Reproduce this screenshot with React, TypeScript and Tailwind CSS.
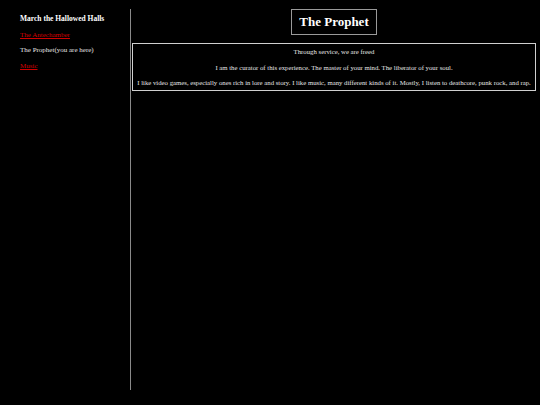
export default function App() {
  return (
    <div
      className="min-h-[405px] bg-black text-[#e6e6e6] flex"
      style={{ fontFamily: "'Liberation Serif', 'Times New Roman', serif" }}
    >
      {/* sidebar */}
      <aside className="w-[131px] pl-[20px] pt-[9px] shrink-0">
        <div className="h-[381px] border-r border-[#8a8a8a] pt-[5px] flex flex-col gap-[5.5px]">
          <p className="text-[7.5px] font-bold leading-[10px] text-white">March the Hallowed Halls</p>
          <a href="#" className="text-[7px] leading-[10px] text-[#d00000] underline">The Antechamber</a>
          <p className="text-[7px] leading-[10px]">The Prophet(you are here)</p>
          <a href="#" className="text-[7px] leading-[10px] text-[#d00000] underline">Music</a>
        </div>
      </aside>

      {/* main */}
      <main className="flex-1 pl-[1px] pr-[4px] pt-[9px]">
        <div className="flex justify-center">
          <h1 className="border border-[#9a9a9a] px-[7px] py-[3px] text-[13px] font-bold leading-[18px] text-white">
            The Prophet
          </h1>
        </div>
        <section className="mt-[8px] border border-[#d0d0d0] px-[1px] pt-[3px] pb-[2px] text-center text-[6.75px] leading-[10px] flex flex-col gap-[5.5px]">
          <p>Through service, we are freed</p>
          <p>I am the curator of this experience. The master of your mind. The liberator of your soul.</p>
          <p className="whitespace-nowrap">
            I like video games, especially ones rich in lore and story. I like music, many different kinds of it.
            Mostly, I listen to deathcore, punk rock, and rap.
          </p>
        </section>
      </main>
    </div>
  );
}
